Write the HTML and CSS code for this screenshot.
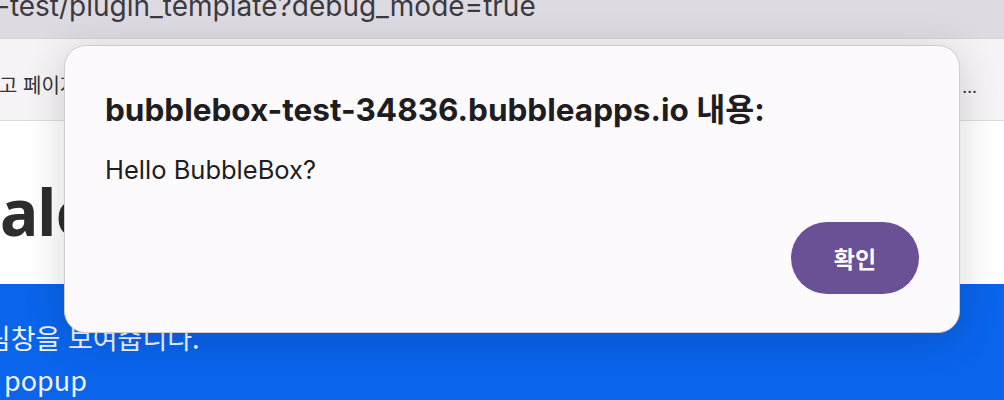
FILE: index.html
```html
<!DOCTYPE html>
<html lang="ko">
<head>
<meta charset="utf-8">
<link rel="stylesheet" href="styles.css">
</head>
<body>
<div class="urlbar"><span class="url">-test/plugin_template?debug_mode=true</span></div>
<div class="tabbar">
  <span class="crumb">고 페이지</span>
  <span class="more">…</span>
</div>
<main class="page">
  <h1 class="heading">alert</h1>
  <section class="band">
    <p class="line1">알림창을 보여줍니다.</p>
    <p class="line2">popup</p>
  </section>
</main>
<div class="dialog" role="dialog">
  <h2 class="title">bubblebox-test-34836.bubbleapps.io 내용:</h2>
  <p class="msg">Hello BubbleBox?</p>
  <div class="actions"><button class="ok">확인</button></div>
</div>
</body>
</html>
```

FILE: styles.css
```css
* { box-sizing: border-box; }
html, body { margin: 0; padding: 0; }
body {
  width: 1004px;
  height: 400px;
  overflow: hidden;
  font-family: Inter, "Noto Sans CJK KR", sans-serif;
  background: #ffffff;
  position: relative;
}
.urlbar {
  height: 39px;
  background: #dedae2;
  display: flex;
  align-items: flex-start;
  border-bottom: 1px solid #d6d2da;
  overflow: hidden;
}
.url {
  margin-left: -3px;
  margin-top: -8px;
  font-size: 28px;
  line-height: 28px;
  color: #3b3a40;
  white-space: nowrap;
}
.tabbar {
  height: 82px;
  background: #f6f3f7;
  border-bottom: 1px solid #dcdadc;
  display: flex;
  align-items: center;
  justify-content: space-between;
  padding-right: 27px;
}
.crumb {
  font-family: "Noto Sans CJK KR", sans-serif;
  font-size: 20px;
  color: #333;
  margin-left: -1px;
  margin-top: 10px;
  white-space: nowrap;
}
.more {
  font-size: 17px;
  color: #333;
  margin-top: 14px;
}
.page { display: flex; flex-direction: column; }
.heading {
  margin: 0;
  height: 163px;
  padding-top: 59px;
  font-family: "Noto Sans", "Noto Sans CJK KR", sans-serif;
  font-size: 64px;
  font-weight: 700;
  line-height: 64px;
  color: #2d2d2d;
  letter-spacing: -1px;
  white-space: nowrap;
  overflow: hidden;
}
.band {
  background: #0a64ec;
  height: 120px;
  color: #f0f4ff;
  padding-top: 33px;
}
.band p {
  margin: 0;
  font-size: 27px;
  line-height: 42px;
  font-family: "Noto Sans CJK KR", sans-serif;
  white-space: nowrap;
}
.band .line1 { margin-left: -39px; }
.band .line2 { margin-left: 4px; }
.dialog {
  position: absolute;
  left: 64px;
  top: 45px;
  width: 896px;
  height: 288px;
  background: #fdfafd;
  border: 1px solid #d0cdd2;
  border-radius: 22px;
  box-shadow: 0 6px 40px rgba(0,0,0,0.16);
  padding: 48px 40px 38px 40px;
  display: flex;
  flex-direction: column;
}
.title {
  margin: 0;
  font-size: 31.5px;
  font-weight: 700;
  color: #1e1d21;
  line-height: 32px;
  white-space: nowrap;
}
.msg {
  margin: 30px 0 0;
  font-size: 25.5px;
  color: #1e1d21;
  line-height: 28px;
}
.actions {
  margin-top: auto;
  display: flex;
  justify-content: flex-end;
}
.ok {
  width: 128px;
  height: 72px;
  border: none;
  border-radius: 36px;
  background: #6a5196;
  color: #ffffff;
  font-family: "Noto Sans CJK KR", sans-serif;
  font-size: 23px;
  font-weight: 700;
}
```
